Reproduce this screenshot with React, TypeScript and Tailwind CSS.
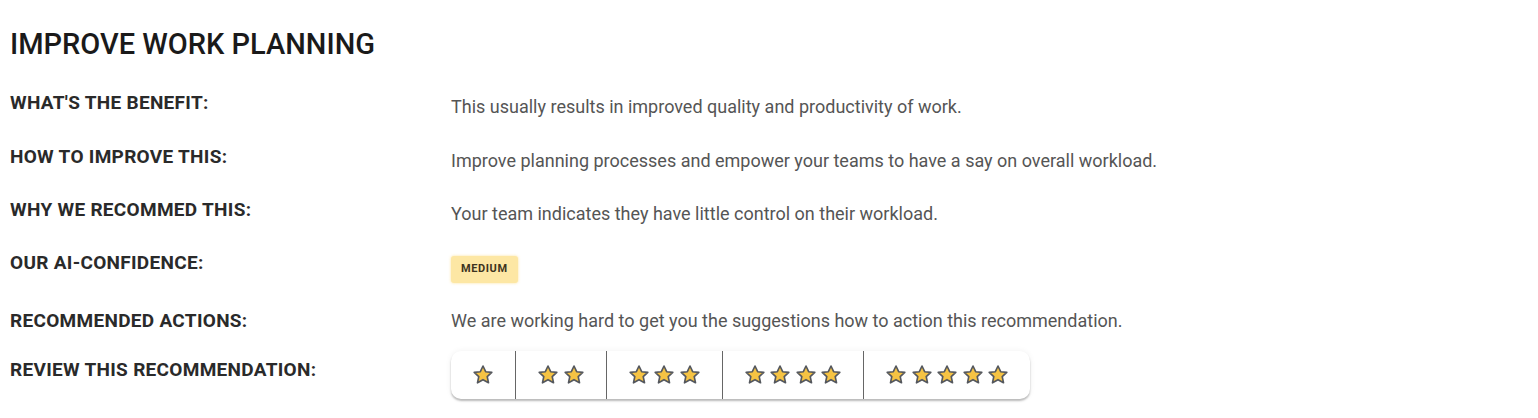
import React from "react";

type Row = { label: string; h: string; node: React.ReactNode };

function Star() {
  return (
    <svg width="22" height="22" viewBox="0 0 24 24" className="shrink-0">
      <path
        d="M12 2.2l2.9 6.2 6.7.8-5 4.6 1.4 6.7L12 17.1l-6 3.4 1.4-6.7-5-4.6 6.7-.8z"
        fill="#f6c343"
        stroke="#55585e"
        strokeWidth="1.8"
        strokeLinejoin="round"
      />
    </svg>
  );
}

function Rating() {
  return (
    <div className="inline-flex h-[48px] rounded-[10px] bg-white shadow-[0_2px_2px_rgba(0,0,0,0.25),0_0_6px_rgba(0,0,0,0.06)]">
      {[1, 2, 3, 4, 5].map((n, i) => (
        <div
          key={n}
          className={`flex items-center gap-[3.5px] px-[21px] ${i > 0 ? "border-l border-[#666]" : ""}`}
        >
          {Array.from({ length: n }).map((_, k) => (
            <Star key={k} />
          ))}
        </div>
      ))}
    </div>
  );
}

const text = "block text-[18px] leading-[24px] text-[#555]";

const ROWS: Row[] = [
  {
    label: "What's the benefit:",
    h: "h-[54px]",
    node: <span className={`${text} mt-[4px]`}>This usually results in improved quality and productivity of work.</span>,
  },
  {
    label: "How to improve this:",
    h: "h-[53px]",
    node: (
      <span className={`${text} mt-[4px]`}>
        Improve planning processes and empower your teams to have a say on overall workload.
      </span>
    ),
  },
  {
    label: "Why we recommed this:",
    h: "h-[53px]",
    node: <span className={`${text} mt-[4px]`}>Your team indicates they have little control on their workload.</span>,
  },
  {
    label: "Our AI-confidence:",
    h: "h-[58px]",
    node: (
      <span className="mt-[5px] inline-flex h-[27px] items-center bg-[#fde7a4] rounded-[3px] px-[10px] text-[11px] font-bold tracking-[0.6px] text-[#3d3420] shadow-[0_0_3px_rgba(253,220,130,0.8)]">
        MEDIUM
      </span>
    ),
  },
  {
    label: "Recommended actions:",
    h: "h-[49px]",
    node: (
      <span className={text}>We are working hard to get you the suggestions how to action this recommendation.</span>
    ),
  },
  {
    label: "Review this recommendation:",
    h: "h-[50px]",
    node: (
      <div className="-mt-[7px]">
        <Rating />
      </div>
    ),
  },
];

export default function App() {
  return (
    <div className="w-[1538px] h-[418px] bg-white pl-[10px] pt-[27px] font-['Roboto',sans-serif] overflow-hidden">
      <h1 className="text-[29px] font-medium text-[#1a1a1a] leading-[34px] mb-[30px]">IMPROVE WORK PLANNING</h1>
      <div className="flex flex-col">
        {ROWS.map((r) => (
          <div key={r.label} className={`flex items-start ${r.h}`}>
            <div className="w-[441px] shrink-0 uppercase font-bold text-[19px] leading-[24px] tracking-[0.3px] text-[#2a2a2a]">
              {r.label}
            </div>
            <div className="flex-1 flex">{r.node}</div>
          </div>
        ))}
      </div>
    </div>
  );
}
